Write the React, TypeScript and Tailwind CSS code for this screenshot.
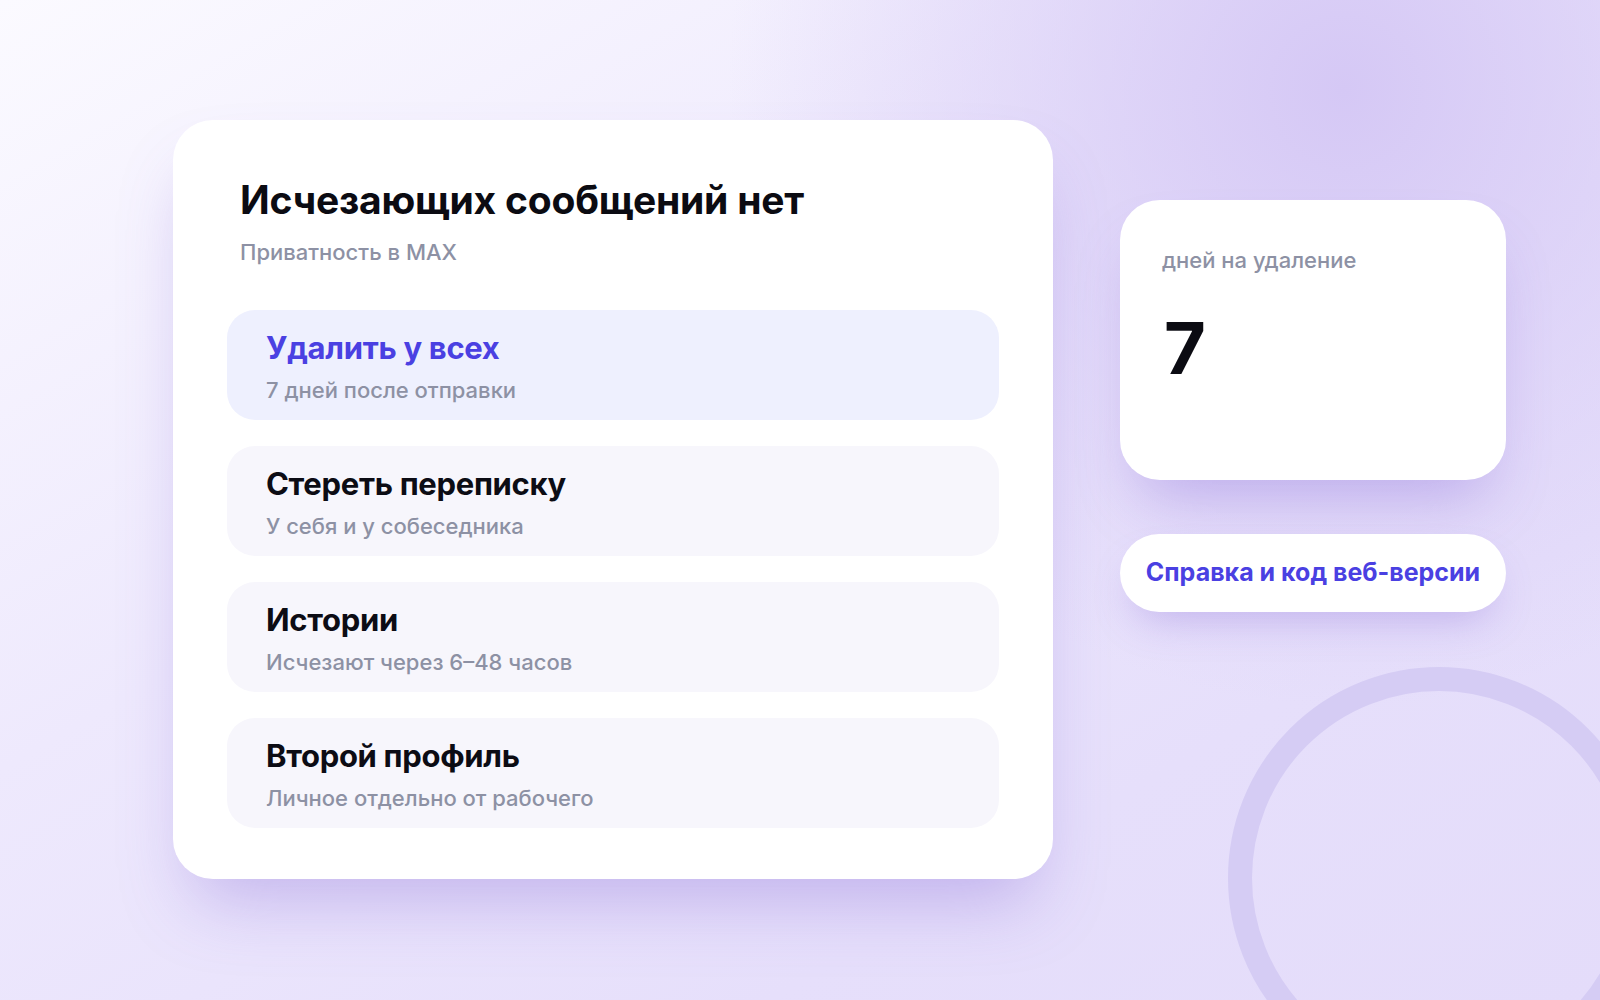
const items = [
  { title: "Удалить у всех", sub: "7 дней после отправки", active: true },
  { title: "Стереть переписку", sub: "У себя и у собеседника", active: false },
  { title: "Истории", sub: "Исчезают через 6–48 часов", active: false },
  { title: "Второй профиль", sub: "Личное отдельно от рабочего", active: false },
];

function OptionRow({ title, sub, active }: { title: string; sub: string; active: boolean }) {
  return (
    <div
      className={
        "flex h-[110px] flex-col justify-center rounded-[28px] px-[39px] pt-[2px] " +
        (active ? "bg-[#eef0fe]" : "bg-[#f7f6fc]")
      }
    >
      <div
        className={
          "text-[31px] font-bold leading-[38px] tracking-[-0.01em] " +
          (active ? "text-[#4a40e2]" : "text-[#0c0c14]")
        }
      >
        {title}
      </div>
      <div className="mt-[10px] text-[22px] font-medium leading-[26px] text-[#8d91a4]">{sub}</div>
    </div>
  );
}

export default function App() {
  return (
    <div
      className="relative h-screen w-full overflow-hidden bg-[radial-gradient(circle_at_84%_9%,#d5c8f5_0%,rgba(213,200,245,0)_38%),linear-gradient(150deg,#fbfaff_0%,#eee9fd_40%,#e6dffb_75%,#e4dcfa_100%)] font-['Inter','Liberation_Sans',Arial,sans-serif]"
    >
      {/* decorative ring */}
      <div className="pointer-events-none absolute left-[1228px] top-[667px] h-[422px] w-[422px] rounded-full border-[24px] border-[#d5ccf4]" />

      <div className="relative flex pl-[173px] pt-[120px]">
        <div className="w-[880px] rounded-[40px] bg-white px-[54px] pb-[51px] pt-[56px] shadow-[0_40px_70px_-20px_rgba(120,90,210,0.35)]">
          <div className="px-[13px]">
            <h1 className="text-[39px] font-bold leading-[48px] tracking-[-0.005em] text-[#0b0b12]">
              Исчезающих сообщений нет
            </h1>
            <p className="mt-[15px] text-[22px] font-medium leading-[26px] text-[#8d91a4]">Приватность в MAX</p>
          </div>
          <div className="mt-[45px] flex flex-col gap-[26px]">
            {items.map((it) => (
              <OptionRow key={it.title} {...it} />
            ))}
          </div>
        </div>

        <div className="ml-[67px] w-[386px] pt-[80px]">
          <div className="h-[280px] rounded-[40px] bg-white px-[42px] pt-[47px] shadow-[0_35px_60px_-20px_rgba(120,90,210,0.35)]">
            <div className="text-[22px] font-medium leading-[26px] text-[#8d91a4]">дней на удаление</div>
            <div className="mt-[39px] pl-[2px] text-[72px] font-bold leading-[72px] text-[#0b0b12]">7</div>
          </div>
          <button className="mt-[54px] flex h-[78px] w-full items-center justify-center rounded-full bg-white text-[25px] font-bold text-[#4a40e2] shadow-[0_20px_40px_-15px_rgba(120,90,210,0.35)]">
            Справка и код веб-версии
          </button>
        </div>
      </div>
    </div>
  );
}
